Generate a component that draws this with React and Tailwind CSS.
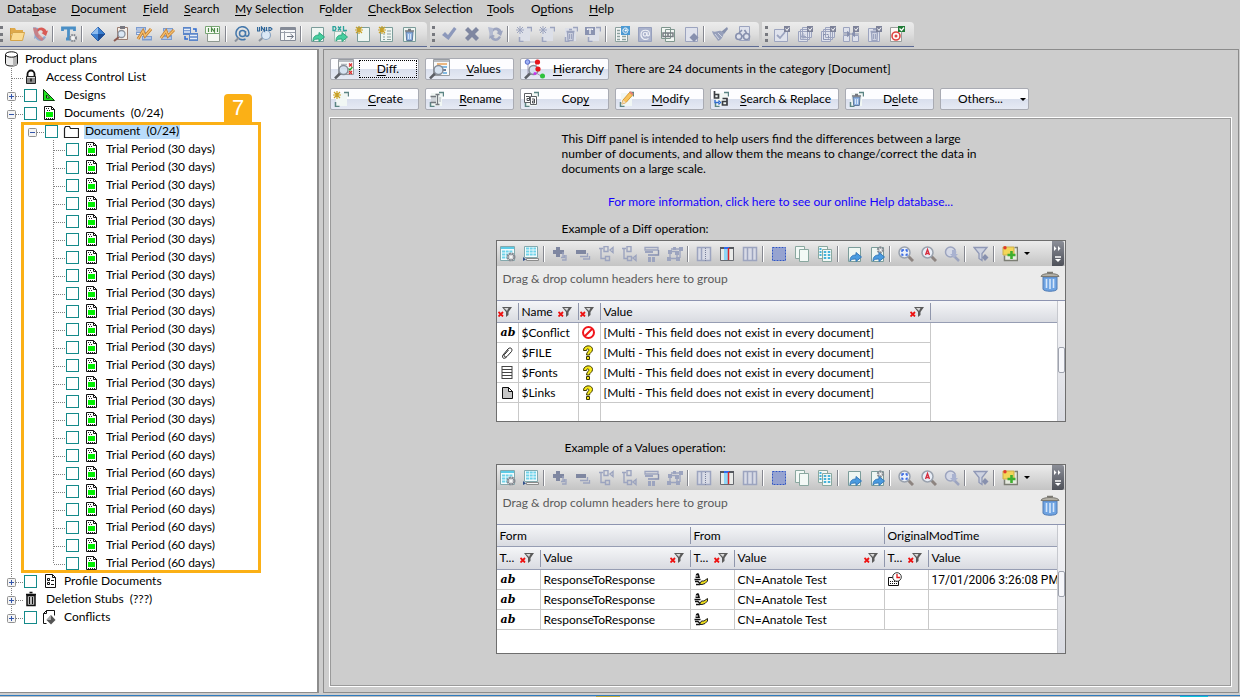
import { useState } from "react";

const DIM = "#9ca4bf";
const TEAL = "#7b9c9a";

const page = <path d="M2.5 1.5h12v14h-12z" fill="#eef6f2" stroke={TEAL} />;
const dimPage = <path d="M2.5 1.5h12v14h-12z" fill="#dfe2ec" stroke={DIM} />;
const star = <path d="M4 0v8M0 4h8M1 1l6 6M7 1l-6 6" stroke="#c9a227" strokeWidth="1.2" />;
const dimStar = <path d="M4 0v8M0 4h8M1 1l6 6M7 1l-6 6" stroke={DIM} />;
const dimCorners = (
  <>
    <path d="M3 2h11v13H3z" fill="#dcdfe8" />
    <path d="M11 1.5h4.500v4M3.500 11v4.500h4" fill="none" stroke={DIM} strokeWidth="1.500" />
  </>
);
const corners = (
  <>
    <path d="M3 2h11v13H3z" fill="#f1f7f4" />
    <path d="M11 1.5h4.500v4M2.500 11v4.500h4" fill="none" stroke="#5b8583" strokeWidth="1.500" />
  </>
);
const arrow = <path d="M4 15c0-4 2-6 6-6V6.500l5.500 4.500-5.500 4.500V13c-3 0-4 0-6 2z" />;
const tick = (
  <>
    <path d="M10 0h6v6h-6z" fill="#7d8299" />
    <path d="M11.500 2.500l1.500 2 2-3" fill="none" stroke="#fff" />
  </>
);
const trash = (
  <>
    <path d="M5 6h7l-.7 8.500H5.700z" fill="#8fb3e2" stroke="#5f789c" />
    <path d="M4 5h9M7 3.500h3" stroke="#74777e" strokeWidth="1.500" />
    <path d="M7.500 8v5M9.500 8v5" stroke="#d6e5f8" />
  </>
);
const dimTrash = (
  <path d="M4.500 5.500h8M7 3.500h3M5.500 6.500h6l-.5 8h-5zM7.500 8v5M9.500 8v5" fill="none" stroke={DIM} strokeWidth="1.300" />
);
const lens = (
  <>
    <path d="M10 10l5 5" stroke="#8d8480" strokeWidth="3" />
    <circle cx="6.500" cy="6.500" r="5.500" fill="#e9eff8" stroke="#9aa2ae" strokeWidth="1.500" />
  </>
);
const bigLens = (
  <>
    <path d="M1 19.500l6-6" stroke="#5c5f66" strokeWidth="2.500" />
    <circle cx="9.500" cy="11" r="4.500" fill="#d3e0ef" fillOpacity=".9" stroke="#858c97" strokeWidth="1.500" />
  </>
);

const ICONS = {
  open: (
    <>
      <path d="M1 2h5l1 2h7v4H1z" fill="#dfa94a" />
      <path d="M3.500 6.500h12l-2 8h-12z" fill="#fbdb92" stroke="#d5a54a" />
      <path d="M1.500 2v12" stroke="#d09a3e" />
    </>
  ),
  reload: (
    <>
      <path d="M1 1l5 1v7l-3 1z" fill="#8ea9cf" />
      <path d="M5 4c2-4 8-3 9.500 1l1.500-.5-2 5.500-4.500-3 1.500-.8C10 3.500 7 4 6 6z" fill="#d95b55" />
      <path d="M14 11c-2 5-8 5-10.500 1L2 13l1-6 5 3-1.700 1c1.500 2 4 2 5.700-1z" fill="#8ea9cf" />
      <path d="M1 2l3-.5L7 8l5 5-2 2c-5-2-8-6-9-13z" fill="#dd716a" opacity=".7" />
    </>
  ),
  textOptions: (
    <>
      <path d="M1.500 5V2h12v3M7.500 2v11M5 13h5" fill="none" stroke="#4a8fc6" strokeWidth="2.800" />
      <circle cx="12" cy="12" r="3" fill="#f4f4f4" stroke="#83878f" strokeWidth="2" strokeDasharray="1.600 .8" />
    </>
  ),
  diamond: (
    <>
      <path d="M8 1l7 7-7 7-7-7z" fill="#3a7fd0" stroke="#2e5fa5" />
      <path d="M8 1v7H1z" fill="#8dbbee" />
      <path d="M8 15V8h7z" fill="#1f4f96" />
    </>
  ),
  clipSearch: (
    <>
      <path d="M4.500 1.500h10v12h-10z" fill="#f5efe8" stroke="#9b7f73" />
      <path d="M7 0h5v3H7z" fill="#77777f" />
      <path d="M1 15l5-4" stroke="#8a5a50" strokeWidth="2" />
      <circle cx="8.500" cy="8" r="3.500" fill="#dbe8f5" stroke="#8b929d" strokeWidth="1.300" />
    </>
  ),
  editDb: (
    <>
      <path d="M0 1h10v3.500H0zM0 5.500h10V9H0zM6 10h10v4.500H6z" fill="#7c9cd0" />
      <path d="M1 3h8M1 7.500h8M7 12h8" stroke="#e6eef9" />
      <path d="M2 13l5-8 2 5 6-7" fill="none" stroke="#c9812c" strokeWidth="3" />
      <path d="M2 13l5-8 2 5 6-7" fill="none" stroke="#f3bf72" strokeWidth="1.300" />
    </>
  ),
  editDb2: (
    <>
      <path d="M4 2h10v3.500H4zM2 9h11v5H2z" fill="#7c9cd0" />
      <path d="M5 4h8M3 12h9" stroke="#e6eef9" />
      <path d="M2 12l5-7 2 5 6-6" fill="none" stroke="#c9812c" strokeWidth="3" />
      <path d="M2 12l5-7 2 5 6-6" fill="none" stroke="#f3bf72" strokeWidth="1.300" />
    </>
  ),
  copyDb: (
    <>
      <path d="M1 1h8v8H1zM7 7h9v8H7z" fill="#5c86c9" />
      <path d="M2 3.500h6M2 6h6M8 9.500h7M8 12.500h7" stroke="#e6eef9" strokeWidth="1.300" />
      <path d="M3 10v3h3M11 3h3v3" fill="none" stroke="#2f6bd0" strokeWidth="1.500" />
    </>
  ),
  ini: (
    <>
      <path d="M2.500 1.500h12v14h-12z" fill="#f5f8f3" stroke="#8f9991" />
      <path d="M.5 .5h14v7H.5z" fill="#f9fcf6" stroke="#79a675" />
      <path d="M3.500 2v4M6.500 6V2l3 4V2M12.500 2v4" fill="none" stroke="#4c8a47" strokeWidth="1.200" />
    </>
  ),
  atSearch: (
    <>
      <path d="M11.500 10V5M11.500 7.500a3 3 0 1 1-6 0 3 3 0 0 1 6 0zM11.500 8.500c0 3 3.500 2 3.500-1a6.500 6.500 0 1 0-3.500 5.500" fill="none" stroke="#4377ab" strokeWidth="1.500" />
      <path d="M1 15.500l4-4" stroke="#8b929d" strokeWidth="2" />
    </>
  ),
  unid: (
    <>
      <path d="M2 15l4-3.500" stroke="#8b929d" strokeWidth="2" />
      <circle cx="9" cy="9" r="4.500" fill="#dbe8f5" stroke="#8ba5c2" strokeWidth="1.200" />
      <path d="M.5 1v4h2V1M4.500 5V1l3 4V1M9.500 1v4M12 1.500h1.500L15 3l-1.500 1.500H12z" fill="none" stroke="#2f6699" strokeWidth="1.200" />
    </>
  ),
  formArrow: (
    <>
      <path d="M.5 1.500h15v13H.5z" fill="#f7f8fa" stroke="#858b97" />
      <path d="M1 3h14" stroke="#858b97" strokeWidth="2" />
      <path d="M4.500 5v9M1 6.500h14" stroke="#9aa0ab" />
      <path d="M7 10.500h6M10.500 8l3 2.500-3 2.500" fill="none" stroke="#6f7684" />
    </>
  ),
  exportDoc: <>{page}<g fill="#45cf9f" stroke="#2fa57e">{arrow}</g></>,
  dxl: (
    <>
      <path d="M2.500 5.500h11v10h-11z" fill="#eef6f2" stroke="#a6bdb5" />
      <g fill="#45cf9f" stroke="#2fa57e">{arrow}</g>
      <path d="M1 .5h2l1 2-1 2H1zM6 .5l3 4M9 .5l-3 4M11.500 0v4.500H15" fill="none" stroke="#2aa39b" strokeWidth="1.300" />
    </>
  ),
  newDoc: <>{page}{star}</>,
  newList: <>{page}<path d="M5 8h2M9 8h4M5 11h2M9 11h4M9 5h4M5 13.500h2M9 13.500h4" stroke="#8ba09e" />{star}</>,
  trashDoc: <>{page}{trash}</>,
  check: <path d="M1 9l3-3 3 3 6-8 2.500 2L7.500 14z" fill="#8c98bb" />,
  cross: <path d="M1 4l3-3 4 4 4-4 3 3-4 4 4 4-3 3-4-4-4 4-3-3 4-4z" fill="#7f87a1" />,
  dimReload: (
    <>
      <path d="M5 4c2-4 8-3 9.500 1l1.500-.5-2 5.500-4.500-3 1.500-.8C10 3.500 7 4 6 6z" fill={DIM} />
      <path d="M14 11c-2 5-8 5-10.500 1L2 13l1-6 5 3-1.700 1c1.500 2 4 2 5.700-1z" fill={DIM} />
      <path d="M1 1l5 1v7l-3 1z" fill="#b3bad0" />
    </>
  ),
  dimNew: <>{dimCorners}{dimStar}</>,
  dimTrash: <>{dimCorners}{dimTrash}</>,
  dimText: (
    <>
      {dimCorners}
      <path d="M0 1h10v8H0z" fill="#8a93b1" />
      <path d="M2.500 4V3h5v1M5 3v5" fill="none" stroke="#fff" strokeWidth="1.200" />
    </>
  ),
  formAt: (
    <>
      <path d="M1.500 1.500h12v14h-12z" fill="#f5f7f6" stroke="#8ba09e" />
      <path d="M3 4.500h3M3 7.500h3M3 10.500h3M8 10.500h4M3 13.500h3M8 13.500h4" stroke="#8ba09e" strokeWidth="1.500" />
      <path d="M7 0h9v9H7z" fill="#4d9ad3" />
      <path d="M13.500 6.500c-3 2-5-.5-4.500-2.500.5-3 5.500-2.500 5 1-1 1-1.500 0-1.500-1.500" fill="none" stroke="#fff" />
      <circle cx="11.500" cy="4.500" r="1" fill="#fff" />
    </>
  ),
  dimAt: (
    <>
      <path d="M1.500 1.500h13v14h-13z" fill="#aab2cc" stroke="#97a0bd" />
      <path d="M11.500 12.500c-4 2.500-8-.5-7.500-4.500.5-5 8.500-5 8.500 0 0 2-2.500 3-2.500 0V6" fill="none" stroke="#eef0f7" strokeWidth="1.200" />
      <circle cx="8" cy="8.300" r="1.800" fill="none" stroke="#eef0f7" strokeWidth="1.200" />
    </>
  ),
  linkDocs: (
    <>
      <path d="M1.500 1.500h9v11h-9zM5.500 3.500h9v12h-9z" fill="#f2f6f3" stroke="#7f968e" />
      <path d="M3 7h5v3.500H3zM8 7h5v3.500H8z" fill="none" stroke="#777c82" strokeWidth="1.500" />
    </>
  ),
  dimDiamondDoc: <>{dimPage}<path d="M11 7l4.500 4.500L11 16l-4.500-4.500z" fill="#8790ae" /></>,
  brush: (
    <>
      <path d="M9 6l6-5 1 2-4 5z" fill="#8791ad" />
      <path d="M0 5c4 2 6-1 9 0l3 2c-1 4-3 7-6 8-1-3-5-5-6-10z" fill="#97a0bb" />
      <path d="M3 8l4 5M6 7l4 4" stroke="#cfd4e2" />
    </>
  ),
  find: (
    <>
      <path d="M4.500 .5h10v14h-10z" fill="#dfe2ec" stroke={DIM} />
      <circle cx="3.800" cy="10.500" r="3" fill="#dfe2ec" stroke="#8790ae" strokeWidth="1.600" />
      <circle cx="11.500" cy="10.500" r="3" fill="#dfe2ec" stroke="#8790ae" strokeWidth="1.600" />
      <path d="M4 7l3-3M11.500 7l-2-3M7 10h1.500" stroke="#8790ae" strokeWidth="1.600" />
    </>
  ),
  tickDoc: (
    <>
      <path d="M.5 3.500h13v12H.5z" fill="#dfe2ec" stroke={DIM} />
      <path d="M3 9l3 3 5-6" fill="none" stroke={DIM} strokeWidth="1.800" />
      {tick}
    </>
  ),
  tickNew: (
    <>
      <path d="M5.500 1.500h9v10h-9zM3.500 3.500h9v10h-9zM1.500 5.500h9v10h-9z" fill="#dfe2ec" stroke={DIM} />
      <path d="M6 7v7M3 10.500h6M4 8.500l4 4M8 8.500l-4 4" stroke={DIM} />
      {tick}
    </>
  ),
  tickSelect: (
    <>
      <path d="M5.500 1.500h9v10h-9zM3.500 3.500h9v10h-9zM1.500 5.500h9v10h-9z" fill="#dfe2ec" stroke={DIM} />
      <path d="M3.500 8.500h5v5h-5z" fill="none" stroke="#8790ae" strokeDasharray="2 1" />
      {tick}
    </>
  ),
  tickMerge: (
    <>
      <path d="M.5 1.500h6v5h-6zM.5 9.500h6v6h-6zM9.500 9.500h6v6h-6z" fill="#dfe2ec" stroke={DIM} />
      <path d="M0 8h5M16 8h-5M4.500 5.500L7.500 8l-3 2.500zM11.500 5.500L8.500 8l3 2.500z" fill="#8790ae" stroke="#8790ae" />
      {tick}
    </>
  ),
  tickTrash: <><path d="M2.500 2.500h11v13h-11z" fill="#dfe2ec" stroke={DIM} />{dimTrash}{tick}</>,
  tickTarget: (
    <>
      <path d="M1.500 1.500h11v14h-11z" fill="#fdf8f7" stroke="#9a9f9c" />
      <circle cx="7" cy="10" r="4" fill="none" stroke="#dd4540" strokeWidth="1.600" />
      <circle cx="7" cy="10" r="1.500" fill="#dd4540" />
      <path d="M9 0h7v6H9z" fill="#1f7a35" />
      <path d="M10.500 2.500l2 2 2.500-3" fill="none" stroke="#fff" strokeWidth="1.300" />
    </>
  ),
  gridGear: (
    <>
      <path d="M.5 .5h14v14H.5z" fill="#f2fbfd" stroke="#84a9ad" />
      <path d="M1 2h13" stroke="#5ccbe6" strokeWidth="2" />
      <path d="M2 5.500h11M2 8.500h7M2 11.500h5" stroke="#6fd3ea" strokeWidth="2" strokeDasharray="3 .7" />
      <circle cx="11" cy="11" r="3.500" fill="#f4f4f4" stroke="#868b92" strokeWidth="2" strokeDasharray="2 .8" />
      <circle cx="11" cy="11" r="3" fill="#d9dadc" stroke="#868b92" />
      <circle cx="11" cy="11" r="1" fill="#fff" />
    </>
  ),
  gridPanel: (
    <>
      <path d="M1.500 .5h13v11h-13z" fill="#f2fbfd" stroke="#84a9ad" />
      <path d="M3 2.500h10M3 5.500h10M3 8.500h10" stroke="#6fd3ea" strokeWidth="2" strokeDasharray="3 .7" />
      <path d="M3.500 12.500h12v2h-12z" fill="#f4f4f4" stroke="#8b8b8b" />
      <path d="M0 11l3 2.500L0 15z" fill="#30508a" />
    </>
  ),
  plus: (
    <>
      <path d="M4 1h4v3h4v4H8v3H4V8H1V4h3z" fill="#7f87a1" />
      <path d="M11 6v5M9 11.500h3.500V9M14 9v5h-4" fill="none" stroke={DIM} strokeWidth="1.300" />
    </>
  ),
  minus: (
    <>
      <path d="M1 4h10v4H1z" fill="#7f87a1" />
      <path d="M12.500 7v3.500H5M14.500 10v3H8" fill="none" stroke={DIM} strokeWidth="1.300" />
    </>
  ),
  treeUp: <path d="M1 2.500h4M3 2.500v10h4M6 .5h4v5H6zM7.500 10.500h4v4h-4zM15 1.500l-3 2.500 3 2.500z" fill="none" stroke={DIM} strokeWidth="1.400" />,
  treeDown: <path d="M1 2.500h4M3 2.500v10h4M6 .5h4v5H6zM6.500 10.500h4v4h-4zM15 9.500l-3 2.500 3 2.500z" fill="none" stroke={DIM} strokeWidth="1.400" />,
  collapse: (
    <>
      <path d="M1 1.500h13v2.500H1z" fill="none" stroke={DIM} strokeWidth="1.300" />
      <path d="M1 5h8v2H1zM4 8h7v2H4zM4 11h3v5H4zM8 11h3v5H8z" fill={DIM} />
      <path d="M14.500 4v5H11" fill="none" stroke="#8790ae" strokeWidth="1.400" />
    </>
  ),
  cluster: (
    <>
      <path d="M3 5.500h7v7H3zM4 3h9v9" fill="none" stroke={DIM} strokeWidth="1.300" />
      <path d="M1 4h4v4H1zM6 1h3v3H6zM12 1h4v4h-4zM8 5h4v4H8zM0 11h4v4H0zM9 11h4v4H9z" fill={DIM} />
    </>
  ),
  colDots: (
    <>
      <path d="M1.500 1.500h13v13h-13zM5.500 1.500v13" fill="#d8dbe6" stroke={DIM} strokeWidth="1.500" />
      <path d="M9.500 2v13" stroke="#78809b" strokeDasharray="1 1" />
    </>
  ),
  colRed: (
    <>
      <path d="M1.500 1.500h13v13h-13z" fill="#e9ebe9" stroke="#66696f" />
      <path d="M1 2h14" stroke="#55585e" strokeWidth="2" />
      <path d="M5 3h4v11H5z" fill="#8fd6f6" />
      <path d="M5 1h5v2H5z" fill="#2f6af0" />
      <path d="M9.500 2v12" stroke="#d8272a" strokeWidth="1.500" />
    </>
  ),
  colPlain: (
    <path d="M1.500 1.500h13v13h-13zM5.500 1.500v13M10.500 1.500v13" fill="#d8dbe6" stroke={DIM} strokeWidth="1.500" />
  ),
  selectAll: <path d="M1.500 1.500h13v13h-13z" fill="#96a3d0" stroke="#2f55c4" strokeDasharray="2 1" />,
  copyPages: (
    <>
      <path d="M1.500 .5h9v12h-9z" fill="#f3f9f6" stroke="#8aa8a0" />
      <path d="M5.500 3.500h9v12h-9z" fill="#f3f9f6" stroke="#8aa8a0" />
    </>
  ),
  copyTable: (
    <>
      <path d="M1.500 .5h9v12h-9z" fill="#f3f9f6" stroke="#8aa8a0" />
      <path d="M3.500 2v9" stroke="#45b3da" strokeWidth="2" strokeDasharray="2 1" />
      <path d="M5.500 3.500h9v12h-9z" fill="#f3f9f6" stroke="#8aa8a0" />
      <path d="M8 5v9M12 5v9" stroke="#45b3da" strokeWidth="2.500" strokeDasharray="2 1" />
    </>
  ),
  exportBlue: <>{page}<g fill="#4a9be0" stroke="#3579b8">{arrow}</g></>,
  exportGear: (
    <>
      {page}
      <circle cx="11.500" cy="4" r="2.500" fill="#f4f4f4" stroke="#868b92" strokeWidth="2.400" strokeDasharray="1.800 .8" />
      <g fill="#4a9be0" stroke="#3579b8">{arrow}</g>
    </>
  ),
  zoomSelect: <>{lens}<path d="M4 6V4h2M7.500 4H9v2M9 7.500V9H7.500M5.500 9H4V7.500" fill="none" stroke="#2b5fe0" strokeWidth="1.300" /></>,
  zoomText: <>{lens}<path d="M4.500 9l2-5.500 2 5.500M5 7.500h3" fill="none" stroke="#d62c3c" strokeWidth="1.300" /></>,
  zoomDim: (
    <>
      <path d="M10 10l5 5" stroke={DIM} strokeWidth="2.500" />
      <circle cx="6.500" cy="6" r="5" fill="#d5d9e6" stroke={DIM} strokeWidth="1.500" />
      <path d="M8 4h4v4h2l-4 4-4-4h2z" fill="#a9b2d0" />
    </>
  ),
  filterDim: (
    <>
      <path d="M1 1.500h13L9 7.500v7l-3-2v-5z" fill="#cdd2e0" stroke="#8f98b6" strokeWidth="1.300" />
      <path d="M12 8l3.500 3.500L12 15 9 11.500z" fill="#8790ae" />
    </>
  ),
  noteAdd: (
    <>
      <path d="M12.500 1.500h3v13h-13v-5" fill="#e7ebe0" stroke="#7c7e74" strokeWidth="1.500" />
      <path d="M1 1h11v8H1z" fill="#f3d658" stroke="#cdb04a" />
      <circle cx="3" cy="1.800" r="1.700" fill="#df3b2e" />
      <path d="M9.500 5v8M5.500 9h8" stroke="#3fae2f" strokeWidth="2.600" />
    </>
  ),
  create: <>{corners}{star}</>,
  rename: <>{corners}<path d="M3 6h5v5H3zM11 6h2v5h-2z" fill="#cfd4d9" /><path d="M2.500 5.500H8M2.500 11.500H8M7.500 3.500h4M7.500 13.500h4M9.500 4v10" stroke="#73787e" strokeWidth="1.300" /></>,
  copy: (
    <>
      {corners}
      <path d="M1.500 2.500h7v9h-7z" fill="#fff" stroke="#5d6065" />
      <path d="M3 5.500h3.500v4H4v-2h2" fill="none" stroke="#4c4f54" />
      <path d="M7.500 5.500h6v8h-6z" fill="#fff" stroke="#5d6065" />
      <path d="M9 8h2.500v4H9.500v-2h2" fill="none" stroke="#4c4f54" />
    </>
  ),
  modify: (
    <>
      {corners}
      <path d="M4 13l1-4 7-8 3 2.500-7 8z" fill="#f8c45c" stroke="#d99a35" />
      <path d="M4 13l1-4 3 2.500z" fill="#f1dcc0" />
      <path d="M12 1l3 2.500" stroke="#e08078" strokeWidth="2" />
    </>
  ),
  replace: (
    <>
      {corners}
      <path d="M1.500 0v7h4V3.500h-4M9.500 7.500H14V14H9.500v-3.500H14" fill="none" stroke="#3b3d42" strokeWidth="1.700" />
      <path d="M2 9v2.500h4M5.500 9.500l2 2-2 2" fill="none" stroke="#2f6bd0" strokeWidth="1.300" />
    </>
  ),
  remove: <>{corners}{trash}</>,
};

const LARGE_ICONS = {
  diff: (
    <>
      <path d="M4.500 .5h15v15h-15z" fill="#f8f9f9" stroke="#989ca1" />
      <path d="M5 2h14" stroke="#b8bcc2" strokeWidth="2" />
      <path d="M7 5.500h6M7 9.500h6M12 13.500h3" stroke="#b4b9bf" strokeWidth="1.500" />
      <path d="M15 4.500l3 3M18 4.500l-3 3M15 12l3 3M18 12l-3 3" stroke="#dd2f2f" strokeWidth="1.300" />
      <path d="M14.500 9.500l1.500 1.500 2.500-3" fill="none" stroke="#31a035" strokeWidth="1.300" />
      {bigLens}
    </>
  ),
  values: (
    <>
      <path d="M4.500 .5h16v16h-16z" fill="#f8f9f9" stroke="#989ca1" />
      <path d="M5 2h15" stroke="#b8bcc2" strokeWidth="2" />
      <path d="M8 5h10" stroke="#e8a25a" strokeWidth="1.500" />
      <path d="M11 8h7M14 14h4" stroke="#5ba5dc" strokeWidth="1.500" />
      <path d="M13 11h4" stroke="#3d4c70" strokeWidth="1.500" />
      {bigLens}
    </>
  ),
  hierarchy: (
    <>
      <path d="M4 3v12M4 3h9M11 9.500h3M9 12l8 5M12 4v6" fill="none" stroke="#a39dba" />
      <circle cx="3.500" cy="3" r="2.300" fill="#9fb2f5" stroke="#5669c9" />
      <circle cx="13.500" cy="3" r="2.600" fill="#e8151b" />
      {bigLens}
      <circle cx="14" cy="10" r="2.600" fill="#e8151b" />
      <circle cx="11" cy="14.500" r="1.600" fill="#c63ae8" />
      <circle cx="18.500" cy="17" r="2.500" fill="#2fc23c" />
    </>
  ),
};

const TREE_ICONS = {
  database: (
    <>
      <path d="M1.500 3.500v9c0 1.500 2.500 2.500 6 2.500s6-1 6-2.500v-9" fill="#ececec" stroke="#111" />
      <path d="M9 6v9c2.500 0 4-1 4-2V4.500z" fill="#b5b5b5" />
      <ellipse cx="7.500" cy="3.500" rx="6" ry="2.700" fill="#fff" stroke="#111" />
    </>
  ),
  lock: (
    <>
      <path d="M4.500 8V5a3.500 3.500 0 0 1 7 0v3" fill="none" stroke="#111" strokeWidth="1.800" />
      <path d="M3.500 7.500h9v7h-9z" fill="#8c8c8c" stroke="#222" />
      <path d="M4 8.500h8" stroke="#ddd" />
      <path d="M8 9.500v3" stroke="#111" strokeWidth="1.500" />
    </>
  ),
  design: (
    <>
      <path d="M1.500 2.500v11h11z" fill="#1ee51e" stroke="#0b3b0b" />
      <path d="M4.500 8v3h3z" fill="#fff" stroke="#0b3b0b" />
    </>
  ),
  document: (
    <>
      <path d="M2.500 1.500h7l3 3v10h-10z" fill="#fff" stroke="#111" />
      <path d="M9.500 1.500v3h3" fill="none" stroke="#111" />
      <path d="M4 3.500h4M5 5.500h4M4 13.500h7" stroke="#222" strokeDasharray="1 1" />
      <path d="M4 7h7v5H4z" fill="#00f000" />
    </>
  ),
  folder: <path d="M1.500 14.500v-9l1-2h4l1 2h8v9z" fill="#fff" stroke="#222" strokeWidth="1.200" />,
  profile: (
    <>
      <path d="M3.500 1.500h7l3 3v10h-10z" fill="#fff" stroke="#111" />
      <path d="M10.500 1.500v3h3M5.500 5.500h2v2h-2zM5.500 9.500h2v2h-2zM9 7.500h3M9 11.500h3" fill="none" stroke="#111" />
    </>
  ),
  stubs: (
    <>
      <path d="M4 4.500h8v10H4z" fill="#bbb" stroke="#111" strokeWidth="1.500" />
      <path d="M3 3.500h10M6.500 1.500h3" stroke="#111" strokeWidth="1.500" />
      <path d="M6.500 6v7M9.500 6v7" stroke="#111" />
    </>
  ),
  conflict: (
    <>
      <path d="M1.500 14.500v-10l3-3h8v5M1.500 14.500h3M4.500 1.500v3h-3" fill="none" stroke="#111" />
      <path d="M9 6l4.500 5L9 15.500 4.500 11z" fill="#555" />
      <path d="M9 6v5H4.500z" fill="#aaa" />
    </>
  ),
};

const CELL_ICONS = {
  forbidden: (
    <>
      <circle cx="7.500" cy="7.500" r="5.500" fill="#fff" stroke="#f0151b" strokeWidth="2" />
      <path d="M4 11l7-7" stroke="#f0151b" strokeWidth="2" />
    </>
  ),
  question: (
    <>
      <path d="M2.500 5.500c0-6 9-6 9-1 0 3-3 3-3 5.500H5.500c0-3 2.500-4 2.500-5S5.500 3 5.500 5.500z" fill="#f7e91b" stroke="#3a3500" />
      <path d="M5.500 11.500h3v3h-3z" fill="#f7e91b" stroke="#3a3500" />
    </>
  ),
  clip: <path d="M4 10l5-6c2.500-2.500 5 0 3.500 2.500L8 11.500c-2 1.500-3.500-.5-2.500-2L9.500 5M4 10c-1.500 3 1 4.500 3.500 2" fill="none" stroke="#222" />,
  lines: <path d="M3 1v13M13 1v13M3 1.500h10M3 4.500h10M3 7.500h10M3 10.500h10M3 13.500h10" fill="none" stroke="#444" />,
  page: (
    <>
      <path d="M3.500 2.500h6l4 4v7h-10z" fill="#c6c6c6" stroke="#111" />
      <path d="M9.500 2.500v4h4z" fill="#fff" stroke="#111" />
    </>
  ),
  signer: (
    <>
      <path d="M2.500 6l.5-4 2-1 1 1 1 4z" fill="#111" />
      <path d="M4 3v2" stroke="#fff" />
      <path d="M1.500 7.500h6M2 9.500h3l2 2M3 12.500h4" fill="none" stroke="#111" strokeWidth="1.300" />
      <path d="M6.500 12.500l2-3.500H11l3.500-2.500V9L12 11.500l-3 1z" fill="#f0e21c" stroke="#222" />
    </>
  ),
  clock: (
    <>
      <path d="M1.500 5.500h10v8h-10z" fill="#fff" stroke="#111" />
      <path d="M3 9.500h7M3 11.500h7" stroke="#111" strokeDasharray="1 1" />
      <circle cx="10" cy="5" r="4.300" fill="#fff" stroke="#333" />
      <path d="M10 2v3.500h3" fill="none" stroke="#e01818" strokeWidth="1.300" />
    </>
  ),
};

const MENU = [
  { label: "Data_base", width: "w-[64px]" },
  { label: "_Document", width: "w-[72px]" },
  { label: "_Field", width: "w-[41px]" },
  { label: "_Search", width: "w-[51px]" },
  { label: "_My Selection", width: "w-[84px]" },
  { label: "F_older", width: "w-[49px]" },
  { label: "_CheckBox Selection", width: "w-[119px]" },
  { label: "_Tools", width: "w-[44px]" },
  { label: "O_ptions", width: "w-[58px]" },
  { label: "_Help", width: "w-[40px]" },
];

const MAIN_TOOLS = [
  ["open", "reload"],
  ["textOptions"],
  ["diamond", "clipSearch", "editDb", "editDb2", "copyDb", "ini"],
  ["atSearch", "unid", "formArrow"],
  ["exportDoc", "dxl", "newDoc", "newList", "trashDoc"],
];
const EDIT_TOOLS = [
  ["check", "cross", "dimReload"],
  ["dimNew", "dimNew", "dimTrash", "dimText"],
  ["formAt", "dimAt", "linkDocs", "dimDiamondDoc"],
  ["brush", "find"],
];
const CHECK_TOOLS = [["tickDoc", "tickNew", "tickSelect", "tickMerge", "tickTrash", "tickTarget"]];
const GRID_TOOLS = [
  ["gridGear", "gridPanel"],
  ["plus", "minus", "treeUp", "treeDown", "collapse", "cluster"],
  ["colDots", "colRed", "colPlain"],
  ["selectAll", "copyPages", "copyTable"],
  ["exportBlue", "exportGear"],
  ["zoomSelect", "zoomText", "zoomDim"],
  ["filterDim"],
  ["noteAdd"],
];

const TRIALS = [...Array(16).fill("Trial Period (30 days)"), ...Array(8).fill("Trial Period (60 days)")];

const DIFF_ROWS = [
  { type: "ab", name: "$Conflict", status: "forbidden" },
  { type: "clip", name: "$FILE", status: "question" },
  { type: "lines", name: "$Fonts", status: "question" },
  { type: "page", name: "$Links", status: "question" },
];

function Mnemonic({ text }) {
  const i = text.indexOf("_");
  if (i < 0) return text;
  return (
    <>
      {text.slice(0, i)}
      <span className="underline underline-offset-2">{text[i + 1]}</span>
      {text.slice(i + 2)}
    </>
  );
}

function Icon({ children }) {
  return (
    <svg viewBox="0 0 16 16" className="h-4 w-4 shrink-0" fill="none" aria-hidden="true">
      {children}
    </svg>
  );
}

function ToolGroups({ groups }) {
  return groups.map((names, g) => (
    <div key={g} className="flex items-center">
      {g > 0 && <span className="mr-1 h-4 w-[2px] border-l border-[#85878f] bg-white" />}
      {names.map((name, i) => (
        <button key={i} type="button" aria-label={name} className="flex h-5 w-[23px] items-center pl-[3px]">
          <Icon>{ICONS[name]}</Icon>
        </button>
      ))}
    </div>
  ));
}

function Toolbar({ groups, className }) {
  return (
    <div
      className={`flex h-[25px] items-center rounded-tr border-b border-[#5c6a94] bg-linear-to-b from-[#ececec] via-[#dedede] to-[#c6c6c6] ${className}`}
    >
      <span className="mr-[3px] h-4 w-[3px] border-l-[3px] border-dotted border-[#77797f]" />
      <ToolGroups groups={groups} />
    </div>
  );
}

// one 21px wide step of the tree lines: v is "full", "half" or nothing
function Branch({ v, h, box, onToggle }) {
  return (
    <svg viewBox="0 0 21 18" className="h-[18px] w-[21px] shrink-0" onClick={onToggle} aria-hidden="true">
      <g stroke="#808080" strokeDasharray="1 1" fill="none">
        {v && <path d={v === "full" ? "M8.500 0v18" : "M8.500 0v10"} />}
        {h && <path d="M9 10.500h11" />}
      </g>
      {box && (
        <>
          <rect x="4.500" y="6.500" width="8" height="8" rx="1" fill="#f4f4f4" stroke="#919191" />
          <path d={box === "plus" ? "M6 10.500h5M8.500 8v5" : "M6 10.500h5"} stroke="#3355aa" />
        </>
      )}
    </svg>
  );
}

function TreeRow({ label, icon, branches = [], checkbox = true, selected, onToggle }) {
  return (
    <div className="flex h-[18px] items-center pl-[3px]">
      {branches.map((b, i) => (
        <Branch key={i} {...b} onToggle={b.box ? onToggle : undefined} />
      ))}
      <label className="flex items-center">
        {checkbox && (
          <input
            type="checkbox"
            className="mr-[3px] h-[13px] w-[13px] shrink-0 appearance-none border border-[#148a8a] bg-white checked:bg-[#148a8a]"
          />
        )}
        <span className={`flex shrink-0 justify-center ${checkbox ? "w-5" : "mr-1 w-[14px]"}`}>
          <Icon>{TREE_ICONS[icon]}</Icon>
        </span>
        <span className={`ml-[3px] px-px leading-4 whitespace-pre ${selected ? "bg-[#b9dcfb]" : ""}`}>{label}</span>
      </label>
    </div>
  );
}

function Tree() {
  const [open, setOpen] = useState(true);
  return (
    <nav className="w-[319px] shrink-0 border-t border-r-2 border-b border-[#8c8c8c] bg-white">
      <div className="flex h-[18px] items-center pl-1">
        <Icon>{TREE_ICONS.database}</Icon>
        <span className="ml-[5px] leading-4">Product plans</span>
      </div>
      <TreeRow label="Access Control List" icon="lock" checkbox={false} branches={[{ v: "full", h: true }]} />
      <TreeRow label="Designs" icon="design" branches={[{ v: "full", h: true, box: "plus" }]} />
      <TreeRow
        label="Documents  (0/24)"
        icon="document"
        branches={[{ v: "full", h: true, box: "minus" }]}
        onToggle={() => setOpen(!open)}
      />
      {open && (
        <div className="relative">
          <TreeRow label="Document  (0/24)" icon="folder" selected branches={[{ v: "full" }, { h: true, box: "minus" }]} />
          {TRIALS.map((label, i) => (
            <TreeRow
              key={i}
              label={label}
              icon="document"
              branches={[{ v: "full" }, {}, { v: i === TRIALS.length - 1 ? "half" : "full", h: true }]}
            />
          ))}
          <div className="pointer-events-none absolute top-0 -bottom-px left-[21px] w-[240px] border-[3px] border-[#fbb016]" />
          <span className="absolute bottom-full left-[224px] flex h-7 w-7 items-center justify-center rounded-t-sm bg-[#fbb016] font-['Liberation_Sans',sans-serif] text-[22px] text-white">
            7
          </span>
        </div>
      )}
      <TreeRow label="Profile Documents" icon="profile" branches={[{ v: "full", h: true, box: "plus" }]} />
      <TreeRow label="Deletion Stubs  (???)" icon="stubs" checkbox={false} branches={[{ v: "full", h: true, box: "plus" }]} />
      <TreeRow label="Conflicts" icon="conflict" branches={[{ v: "half", h: true, box: "plus" }]} />
    </nav>
  );
}

function ActionButton({ label, icon, large, focused, wide }) {
  return (
    <button
      type="button"
      className={`flex h-[22px] items-center rounded-xs border border-[#a9abb3] bg-linear-to-b from-[#fdfdff] from-50% via-[#d9dfed] via-50% to-[#e6eaf4] pl-px ${wide ? "w-[129px]" : "w-[89px]"}`}
    >
      {large ? (
        <svg viewBox="0 0 21 20" className="ml-[2px] h-5 w-[21px] shrink-0" fill="none" aria-hidden="true">
          {LARGE_ICONS[icon]}
        </svg>
      ) : (
        <span className="ml-px">
          <Icon>{ICONS[icon]}</Icon>
        </span>
      )}
      <span
        className={`ml-1 flex-1 whitespace-nowrap text-center leading-4 ${focused ? "mr-px border border-dotted border-black" : ""}`}
      >
        <Mnemonic text={label} />
      </span>
    </button>
  );
}

function FilterMark() {
  return (
    <svg viewBox="0 0 14 10" className="h-[10px] w-[14px] shrink-0" fill="none" aria-label="No filter">
      <path d="M4 0h10l-3.500 5v3L8 10V5z" fill="#5a5a5a" />
      <path d="M6 1h4.500L9 4z" fill="#d8d8d8" />
      <path d="M.5 5l4.500 4.500M5 5L.5 9.500" stroke="#ee1111" strokeWidth="1.800" />
    </svg>
  );
}

function HeadCell({ label, filter, colSpan, last, tight, tall }) {
  return (
    <th
      scope="col"
      colSpan={colSpan}
      className={`border-b border-[#969db3] bg-linear-to-b from-[#f5f6f8] to-[#d9dbe1] p-0 font-normal ${tall ? "h-[23px]" : "h-[22px]"}`}
    >
      <div
        className={`flex h-[17px] items-center overflow-hidden ${tight ? "pl-px" : "pr-[6px] pl-[3px]"} ${last ? "" : "border-r border-[#8f96ac]"}`}
      >
        {label && <span className="flex-1 text-left whitespace-nowrap">{label}</span>}
        {filter && <FilterMark />}
      </div>
    </th>
  );
}

function Cell({ icon, children, last, blank }) {
  return (
    <td
      className={`h-5 p-0 whitespace-nowrap ${icon ? "pl-[2px]" : "pl-[3px]"} ${last ? "" : "border-r"} ${blank ? "" : "border-b"} border-[#c9c9c9]`}
    >
      {icon === "ab" ? (
        <span className="block pl-[2px] font-['DejaVu_Serif',serif] text-[11px] leading-4 font-bold italic">ab</span>
      ) : icon ? (
        <Icon>{CELL_ICONS[icon]}</Icon>
      ) : (
        children
      )}
    </td>
  );
}

function GridFrame({ children, height }) {
  return (
    <section className={`flex flex-col overflow-hidden border border-[#6e6e6e] bg-white ${height}`}>
      <div className="flex h-[25px] shrink-0 items-center bg-linear-to-b from-[#ececec] to-[#c4c4c4]">
        <ToolGroups groups={GRID_TOOLS} />
        <span className="ml-[2px] border-x-[3px] border-t-[3px] border-x-transparent border-t-black" />
        <button
          type="button"
          aria-label="More tools"
          className="mr-px ml-auto flex h-full w-3 items-center justify-center rounded-r-xs bg-linear-to-b from-[#8c8f98] to-[#4e5159]"
        >
          <svg viewBox="0 0 8 18" className="h-[18px] w-2" fill="none">
            <path d="M0 1v5l2.500-2.500zM4 1v5l2.500-2.500z" fill="#fff" />
            <path d="M1 12h6" stroke="#fff" strokeWidth="1.500" />
            <path d="M1 14h6l-3 3z" fill="#fff" />
          </svg>
        </button>
      </div>
      <div className="flex h-[34px] shrink-0 justify-between bg-[#ebebeb] pt-1 pr-1 pl-[6px] text-[#5a5a5a]">
        <span className="leading-[18px]">Drag &amp; drop column headers here to group</span>
        <svg viewBox="0 0 20 21" className="mt-px mr-px h-[21px] w-5" fill="none" aria-label="Trash">
          <path d="M3 6h14v12c0 3-14 3-14 0z" fill="#6ea3e2" stroke="#527cb4" />
          <path d="M6.500 8v9M10 8v10M13.500 8v9" stroke="#d5e6fa" strokeWidth="1.600" />
          <path d="M1 5.500c0-4 18-4 18 0z" fill="#b3b0a6" stroke="#7b7972" />
          <path d="M7 1.500h6" stroke="#7b7972" strokeWidth="1.500" />
        </svg>
      </div>
      <div className="flex flex-1 border-t border-[#8d94b0]">
        <div className="flex-1">{children}</div>
        <div className="flex w-2 flex-col border-l border-[#c6c8ce] bg-linear-to-b from-[#f7f7f9] to-[#d9dbe2] pt-[46px]">
          <span className="h-[26px] rounded-xs border border-[#9fa3ae] bg-[#f6f7fb]" />
        </div>
      </div>
    </section>
  );
}

function DiffExample() {
  return (
    <GridFrame height="h-[182px]">
      <table className="w-full table-fixed border-separate border-spacing-0">
        <colgroup>
          <col className="w-[22px]" />
          <col className="w-[60px]" />
          <col className="w-[22px]" />
          <col className="w-[330px]" />
          <col />
        </colgroup>
        <thead>
          <tr>
            <HeadCell filter tight />
            <HeadCell label="Name" filter />
            <HeadCell filter tight />
            <HeadCell label="Value" filter />
            <HeadCell last />
          </tr>
        </thead>
        <tbody>
          {DIFF_ROWS.map((row) => (
            <tr key={row.name}>
              <Cell icon={row.type} />
              <Cell>{row.name}</Cell>
              <Cell icon={row.status} />
              <Cell>[Multi - This field does not exist in every document]</Cell>
              <Cell last blank />
            </tr>
          ))}
          <tr>
            <Cell blank />
            <Cell blank />
            <Cell blank />
            <Cell blank />
            <Cell last blank />
          </tr>
        </tbody>
      </table>
    </GridFrame>
  );
}

function ValuesExample() {
  return (
    <GridFrame height="h-[190px]">
      <table className="w-full table-fixed border-separate border-spacing-0">
        <colgroup>
          <col className="w-[44px]" />
          <col className="w-[150px]" />
          <col className="w-[44px]" />
          <col className="w-[150px]" />
          <col className="w-[44px]" />
          <col />
        </colgroup>
        <thead>
          <tr>
            <HeadCell label="Form" colSpan={2} />
            <HeadCell label="From" colSpan={2} />
            <HeadCell label="OriginalModTime" colSpan={2} last />
          </tr>
          <tr>
            <HeadCell tall label="T..." filter />
            <HeadCell tall label="Value" filter />
            <HeadCell tall label="T..." filter />
            <HeadCell tall label="Value" filter />
            <HeadCell tall label="T..." filter />
            <HeadCell tall label="Value" last />
          </tr>
        </thead>
        <tbody>
          {["17/01/2006 3:26:08 PM", "", ""].map((time, i) => (
            <tr key={i}>
              <Cell icon="ab" />
              <Cell>ResponseToResponse</Cell>
              <Cell icon="signer" />
              <Cell>CN=Anatole Test</Cell>
              <Cell icon={time ? "clock" : undefined} />
              <Cell last>
                <time className="block font-['Roboto',sans-serif] leading-4">{time}</time>
              </Cell>
            </tr>
          ))}
        </tbody>
      </table>
    </GridFrame>
  );
}

export default function App() {
  return (
    <div className="flex min-h-screen flex-col bg-[#cdcdcd] font-['Lato','Noto_Sans',sans-serif] text-[12px] leading-[18px] text-black">
      <header>
        <ul className="flex h-[22px] pl-[7px]">
          {MENU.map((item) => (
            <li key={item.label} className={`${item.width} shrink-0 whitespace-nowrap`}>
              <button type="button" className="leading-[18px]">
                <Mnemonic text={item.label} />
              </button>
            </li>
          ))}
        </ul>
        <div className="flex h-[27px] gap-[3px]">
          <Toolbar groups={MAIN_TOOLS} className="w-[427px]" />
          <Toolbar groups={EDIT_TOOLS} className="w-[329px] pl-[2px]" />
          <Toolbar groups={CHECK_TOOLS} className="w-[152px] pl-[3px]" />
        </div>
      </header>

      <div className="flex flex-1 gap-1 pr-px">
        <Tree />
        <main className="flex flex-1 flex-col border border-[#8c8c8c] pt-2 pr-[7px] pb-[6px] pl-[6px]">
          <div className="flex items-center gap-[6px]">
            <ActionButton large focused label="_Diff." icon="diff" />
            <ActionButton large label="_Values" icon="values" />
            <ActionButton large label="_Hierarchy" icon="hierarchy" />
            <p>There are 24 documents in the category [Document]</p>
          </div>
          <div className="mt-2 flex gap-[6px]">
            <ActionButton label="_Create" icon="create" />
            <ActionButton label="_Rename" icon="rename" />
            <ActionButton label="Cop_y" icon="copy" />
            <ActionButton label="_Modify" icon="modify" />
            <ActionButton wide label="_Search & Replace" icon="replace" />
            <ActionButton label="D_elete" icon="remove" />
            <button
              type="button"
              className="flex h-[22px] w-[89px] items-center rounded-xs border border-[#a9abb3] bg-linear-to-b from-[#fdfdff] from-50% via-[#d9dfed] via-50% to-[#e6eaf4] pr-[2px]"
            >
              <span className="flex-1 text-center leading-4">Others...</span>
              <span className="border-x-[3px] border-t-[3px] border-x-transparent border-t-black" />
            </button>
          </div>

          <div className="mt-2 flex-1 border border-[#9a9a9a] pt-3 outline outline-white">
            <div className="mx-auto w-[570px]">
              <p className="pl-[66px] leading-[15px]">
                This Diff panel is intended to help users find the differences between a large
                <br />
                number of documents, and allow them the means to change/correct the data in
                <br />
                documents on a large scale.
              </p>
              <p className="mt-[17px] text-center leading-[18px]">
                <a href="#help" className="text-[#1400ff]">
                  For more information, click here to see our online Help database...
                </a>
              </p>
              <h2 className="mt-[9px] mb-[2px] pl-[66px] leading-[18px]">Example of a Diff operation:</h2>
              <DiffExample />
              <h2 className="mt-[17px] mb-[7px] pl-[69px] leading-[18px]">Example of a Values operation:</h2>
              <ValuesExample />
            </div>
          </div>
        </main>
      </div>

      <footer className="mt-[2px] flex h-[2px] border-t border-[#2f7cc0] bg-[#bdbdbd]">
        <span className="ml-[596px] h-px w-6 bg-[#c4a93a]" />
        <span className="mr-8 ml-auto h-px w-7 bg-[#12c4d6]" />
      </footer>
    </div>
  );
}
